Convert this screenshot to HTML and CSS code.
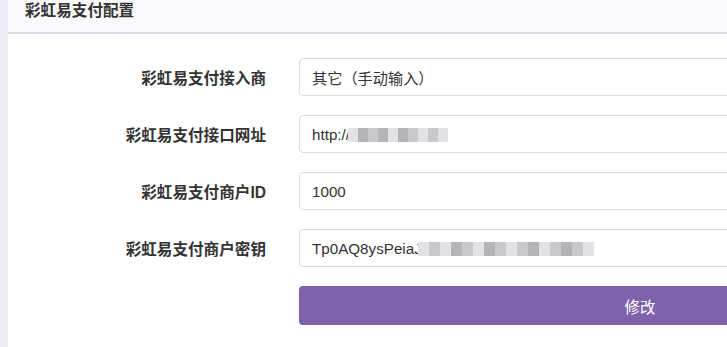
FILE: index.html
```html
<!DOCTYPE html>
<html>
<head>
<meta charset="utf-8">
<title>彩虹易支付配置</title>
<link rel="stylesheet" href="styles.css">
</head>
<body>
<div class="panel">
  <div class="panel-heading">彩虹易支付配置</div>
  <div class="panel-body">
    <form class="form-horizontal">
      <div class="form-group">
        <label class="control-label">彩虹易支付接入商</label>
        <div class="form-control">其它（手动输入）</div>
      </div>
      <div class="form-group">
        <label class="control-label">彩虹易支付接口网址</label>
        <div class="form-control">http://<span class="mosaic m-url"><i class="l"></i><i class="d"></i><i></i><i class="d"></i><i class="l"></i><i class="d"></i><i></i><i class="l"></i><i></i><i class="l"></i></span></div>
      </div>
      <div class="form-group">
        <label class="control-label">彩虹易支付商户ID</label>
        <div class="form-control">1000</div>
      </div>
      <div class="form-group">
        <label class="control-label">彩虹易支付商户密钥</label>
        <div class="form-control">Tp0AQ8ysPeiaJ<span class="mosaic m-key"><i class="l"></i><i></i><i class="l"></i><i class="d"></i><i></i><i class="l"></i><i class="d"></i><i></i><i class="l"></i><i></i><i class="d"></i><i class="l"></i><i></i><i class="d"></i><i></i><i class="l"></i></span></div>
      </div>
      <div class="form-group">
        <span class="control-label"></span>
        <button type="button" class="btn">修改</button>
      </div>
    </form>
  </div>
</div>
</body>
</html>
```

FILE: styles.css
```css
* {box-sizing: border-box}
html, body {
  margin: 0; padding: 0;
}
body {
  background: #edecf3;
  overflow: hidden;
  width: 727px;
  height: 347px;
  font-family: "Liberation Sans", "Noto Sans CJK SC", sans-serif;
  color: #333;
}

.panel {
  margin-left: 8px;
  width: 1100px;
  height: 347px;
  background: #fff;
}
.panel-heading {
  height: 34px;
  padding: 2px 17px 0;
  line-height: 18px;
  font-size: 15.6px;
  font-weight: bold;
  color: #333;
  background: #f9f9fb;
  border-bottom: 2px solid #dddbe7;
}
.panel-body {
  padding-top: 24px;
}
.form-group {
  display: flex;
  align-items: center;
  gap: 33px;
  margin-bottom: 19px;
}
.control-label {
  width: 258px;
  flex: none;
  text-align: right;
  font-size: 15.6px;
  font-weight: bold;
  color: #333;
}
.form-control {
  width: 682px;
  height: 38px;
  padding: 0 12px;
  display: flex;
  align-items: center;
  font-size: 15.2px;
  color: #333;
  border: 1px solid #dcdbe4;
  border-radius: 4px;
  background: #fff;
}
.mosaic {
  display: inline-flex;
  height: 14px;
  margin-left: -2px;
}
.mosaic i {
  width: 10px;
  height: 14px;
  background: #c9c8cd;
}
.mosaic i.d { background: #b4b3ba; }
.mosaic i.l { background: #e2e1e5; }
.m-url { margin-top: 2px; }
.m-key { margin-top: 2px; margin-left: -4px; }
.m-key i { width: 11px; }
.btn {
  width: 682px;
  height: 39px;
  border: none;
  border-radius: 4px;
  background: #7e62ab;
  color: #fff;
  font-family: "Liberation Sans", "Noto Sans CJK SC", sans-serif;
  font-size: 15.4px;
}
```
